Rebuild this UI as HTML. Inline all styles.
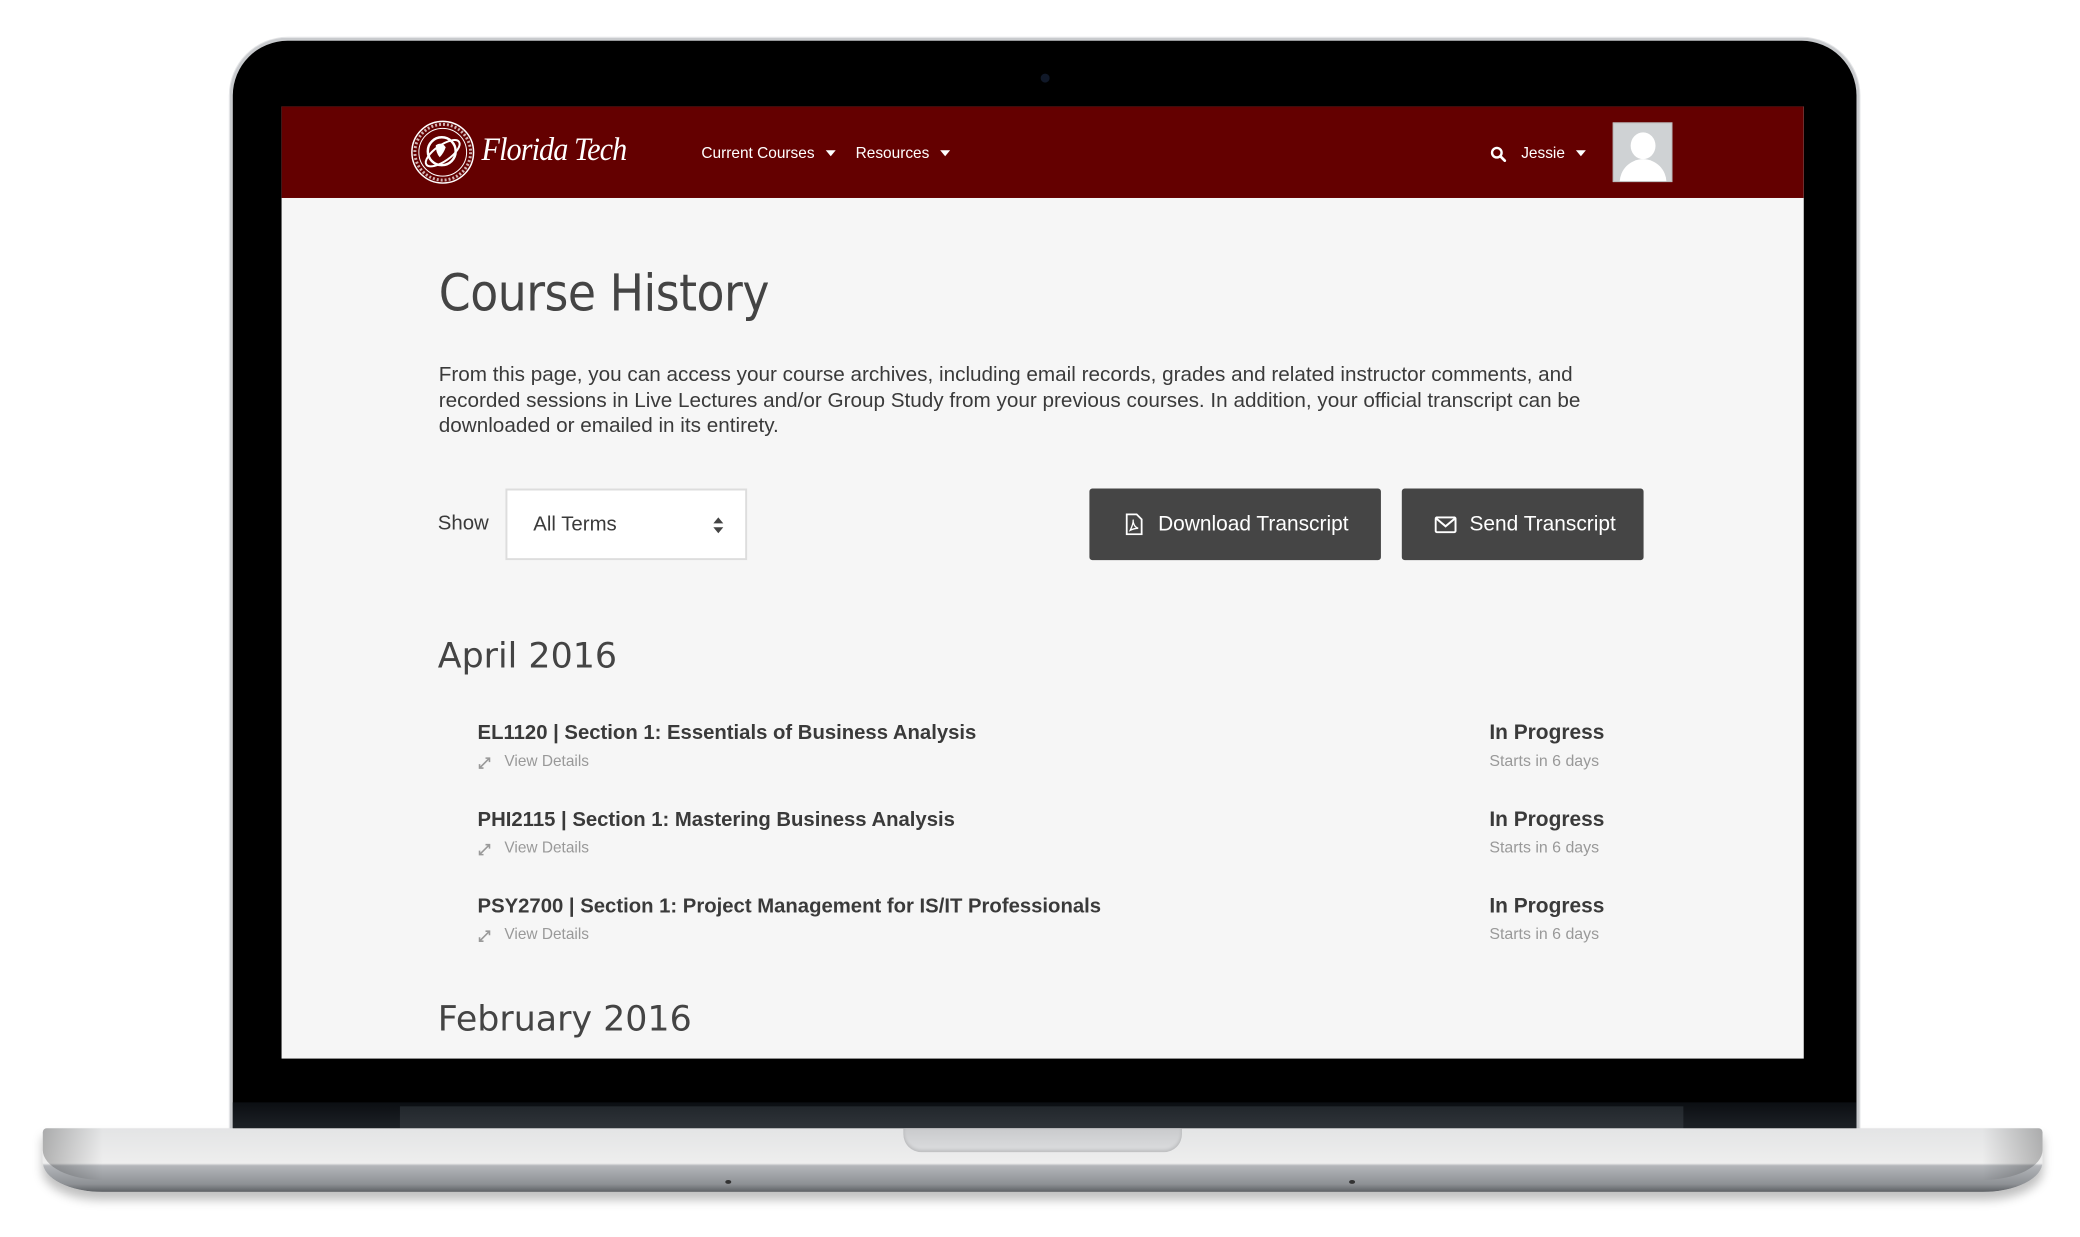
<!DOCTYPE html>
<html><head><meta charset="utf-8"><style>
*{margin:0;padding:0;box-sizing:border-box}
body{width:2080px;height:1237px;background:#fff;position:relative;overflow:hidden;font-family:"Liberation Sans",sans-serif}
#w{position:absolute;left:0;top:0;width:2090px;height:1243px;transform:scale(0.9949);transform-origin:0 0}
.abs{position:absolute}
.bezel{left:231px;top:38px;width:1638px;height:1100px;border-radius:58px 58px 0 0;background:#000;border:3px solid #c9cbce;border-bottom:none;box-shadow:0 0 0 1px #e4e5e7}
.hinge{left:234px;top:1108px;width:1632px;height:26px;background:linear-gradient(#0b0e12,#1d2126)}
.hinge2{left:402px;top:1112px;width:1290px;height:22px;background:linear-gradient(#22272c,#2f3439)}
.screen{left:283px;top:107px;width:1530px;height:957px;background:#f6f6f6;overflow:hidden}
.hdr{left:0;top:0;width:1530px;height:92px;background:#640000;color:#fff}
.base{left:43px;top:1134px;width:2010px;height:64px;border-radius:4px 4px 60px 60px/4px 4px 30px 30px;background:linear-gradient(#e3e4e5 0,#eeeeee 55%,#b3b6ba 59%,#8d9094 88%,#5d6064 100%);box-shadow:0 8px 10px rgba(0,0,0,.25)}
.baseside{left:43px;top:1134px;width:2010px;height:52px;border-radius:4px 4px 60px 60px/4px 4px 30px 30px;background:linear-gradient(90deg,rgba(0,0,0,.25),rgba(0,0,0,0) 3%,rgba(0,0,0,0) 97%,rgba(0,0,0,.25))}
.notch{left:908px;top:1134px;width:280px;height:24px;border-radius:0 0 18px 18px;background:linear-gradient(#c9cacc,#dcdddf);box-shadow:inset 0 -2px 3px rgba(0,0,0,.15)}
.nav{font-size:15.5px;top:39px}
.caret{display:inline-block;width:0;height:0;border-left:5px solid transparent;border-right:5px solid transparent;border-top:6px solid #fff;margin-left:11px;vertical-align:2px}
h1{position:absolute;left:158px;top:158px;font-family:"DejaVu Sans",sans-serif;font-size:46px;color:#444;letter-spacing:-0.5px;font-weight:normal;transform:scaleY(1.1);transform-origin:left top}
.p{left:158px;top:257px;width:1210px;font-size:20.8px;line-height:25.5px;color:#3a3a3a}
.btn{background:#454545;border-radius:3px;color:#fff;font-size:21px;height:72px;top:384px;line-height:72px}
.month{font-family:"DejaVu Sans",sans-serif;font-size:35px;color:#444;left:157px}
.ct{left:197px;font-size:20.4px;font-weight:bold;color:#3a3a3a}
.vd{left:197px;font-size:15.5px;color:#999}
.vd svg{position:absolute;left:0;top:3px}
.ip{left:1214px;font-size:21px;font-weight:bold;color:#3a3a3a}
.sd{left:1214px;font-size:16px;color:#999}
</style></head><body><div id="w">
<div class="abs bezel"></div>
<div class="abs" style="left:1046px;top:74px;width:9px;height:9px;border-radius:50%;background:#101828"></div>
<div class="abs hinge"></div>
<div class="abs hinge2"></div>
<div class="abs screen">
 <div class="abs hdr">
  <svg class="abs" style="left:129px;top:13px" width="66" height="66" viewBox="0 0 66 66"><circle cx="33" cy="33" r="31" fill="none" stroke="#fff" stroke-width="1.5"/><circle cx="33" cy="33" r="24" fill="none" stroke="#fff" stroke-width="1"/><circle cx="33" cy="33" r="28" fill="none" stroke="#fff" stroke-width="3" stroke-dasharray="2 2" opacity=".7"/><circle cx="32" cy="32" r="14" fill="none" stroke="#fff" stroke-width="2.5"/><ellipse cx="33" cy="34" rx="20" ry="8" transform="rotate(-35 33 34)" fill="none" stroke="#fff" stroke-width="2"/><path d="M26 26 q6 -4 10 2 q-2 6 -6 10 q-4 -4 -4 -12z" fill="#fff"/></svg>
  <div class="abs" style="left:201px;top:26px;font-family:'Liberation Serif',serif;font-style:italic;font-size:33px;color:#fff;letter-spacing:-1px;transform:scaleX(.92);transform-origin:left">Florida Tech</div>
  <div class="abs nav" style="left:422px">Current Courses<span class="caret"></span></div>
  <div class="abs nav" style="left:577px">Resources<span class="caret"></span></div>
  <svg class="abs" style="left:1215px;top:40px" width="16" height="16" viewBox="0 0 16 16"><circle cx="6.5" cy="6.5" r="4.8" fill="none" stroke="#fff" stroke-width="2.4"/><path d="M10 10l4.5 4.5" stroke="#fff" stroke-width="2.8" stroke-linecap="round"/></svg>
  <div class="abs nav" style="left:1246px">Jessie<span class="caret"></span></div>
  <div class="abs" style="left:1338px;top:16px;width:60px;height:60px;background:#cfd2d4;border:1px solid #bbb;overflow:hidden">
   <div class="abs" style="left:17px;top:9px;width:25px;height:27px;border-radius:50%;background:#fff"></div>
   <div class="abs" style="left:6px;top:36px;width:47px;height:34px;border-radius:24px 24px 0 0;background:#fff"></div>
  </div>
 </div>
 <h1>Course History</h1>
 <div class="abs p">From this page, you can access your course archives, including email records, grades and related instructor comments, and recorded sessions in Live Lectures and/or Group Study from your previous courses. In addition, your official transcript can be downloaded or emailed in its entirety.</div>
 <div class="abs" style="left:157px;top:407px;font-size:20.5px;color:#3a3a3a">Show</div>
 <div class="abs" style="left:225px;top:384px;width:243px;height:72px;background:#fff;border:2px solid #ddd">
  <div class="abs" style="left:26px;top:22px;font-size:20.5px;color:#3a3a3a">All Terms</div>
  <svg class="abs" style="left:206px;top:26px" width="12" height="18" viewBox="0 0 12 18"><path d="M1 7L6 1l5 6zM1 11l5 6 5-6z" fill="#444"/></svg>
 </div>
 <div class="abs btn" style="left:812px;width:293px">
  <svg class="abs" style="left:36px;top:25px" width="18" height="22" viewBox="0 0 18 22"><path d="M1.5 1h10l5 5v15h-15z" fill="none" stroke="#fff" stroke-width="1.8"/><path d="M5 17c2-4 3-8 3-10s-1 6 5 8c-3 0-6 1-8 2z" fill="none" stroke="#fff" stroke-width="1.3"/></svg>
  <span class="abs" style="left:69px">Download Transcript</span>
 </div>
 <div class="abs btn" style="left:1126px;width:243px">
  <svg class="abs" style="left:33px;top:28px" width="22" height="17" viewBox="0 0 22 17"><rect x="1" y="1" width="20" height="15" rx="1.5" fill="none" stroke="#fff" stroke-width="2"/><path d="M1.5 2l9.5 8 9.5-8" fill="none" stroke="#fff" stroke-width="2"/></svg>
  <span class="abs" style="left:68px">Send Transcript</span>
 </div>
 <div class="abs month" style="top:533px">April 2016</div>
 <div class="abs ct" style="top:619px">EL1120 | Section 1: Essentials of Business Analysis</div>
 <div class="abs vd" style="top:650px"><svg width="14" height="14" viewBox="0 0 14 14"><path d="M2 12L12 2M8 2h4v4M2 8v4h4" fill="none" stroke="#999" stroke-width="1.6"/></svg><span style="margin-left:27px">View Details</span></div>
 <div class="abs ip" style="top:618px">In Progress</div>
 <div class="abs sd" style="top:650px">Starts in 6 days</div>
 <div class="abs ct" style="top:706px">PHI2115 | Section 1: Mastering Business Analysis</div>
 <div class="abs vd" style="top:737px"><svg width="14" height="14" viewBox="0 0 14 14"><path d="M2 12L12 2M8 2h4v4M2 8v4h4" fill="none" stroke="#999" stroke-width="1.6"/></svg><span style="margin-left:27px">View Details</span></div>
 <div class="abs ip" style="top:705px">In Progress</div>
 <div class="abs sd" style="top:737px">Starts in 6 days</div>
 <div class="abs ct" style="top:793px">PSY2700 | Section 1: Project Management for IS/IT Professionals</div>
 <div class="abs vd" style="top:824px"><svg width="14" height="14" viewBox="0 0 14 14"><path d="M2 12L12 2M8 2h4v4M2 8v4h4" fill="none" stroke="#999" stroke-width="1.6"/></svg><span style="margin-left:27px">View Details</span></div>
 <div class="abs ip" style="top:792px">In Progress</div>
 <div class="abs sd" style="top:824px">Starts in 6 days</div>
 <div class="abs month" style="top:898px">February 2016</div>
</div>
<div class="abs base"></div>
<div class="abs baseside"></div>
<div class="abs notch"></div>
<div class="abs" style="left:729px;top:1186px;width:6px;height:4px;border-radius:50%;background:#333"></div>
<div class="abs" style="left:1356px;top:1186px;width:6px;height:4px;border-radius:50%;background:#333"></div>
</div></body></html>
